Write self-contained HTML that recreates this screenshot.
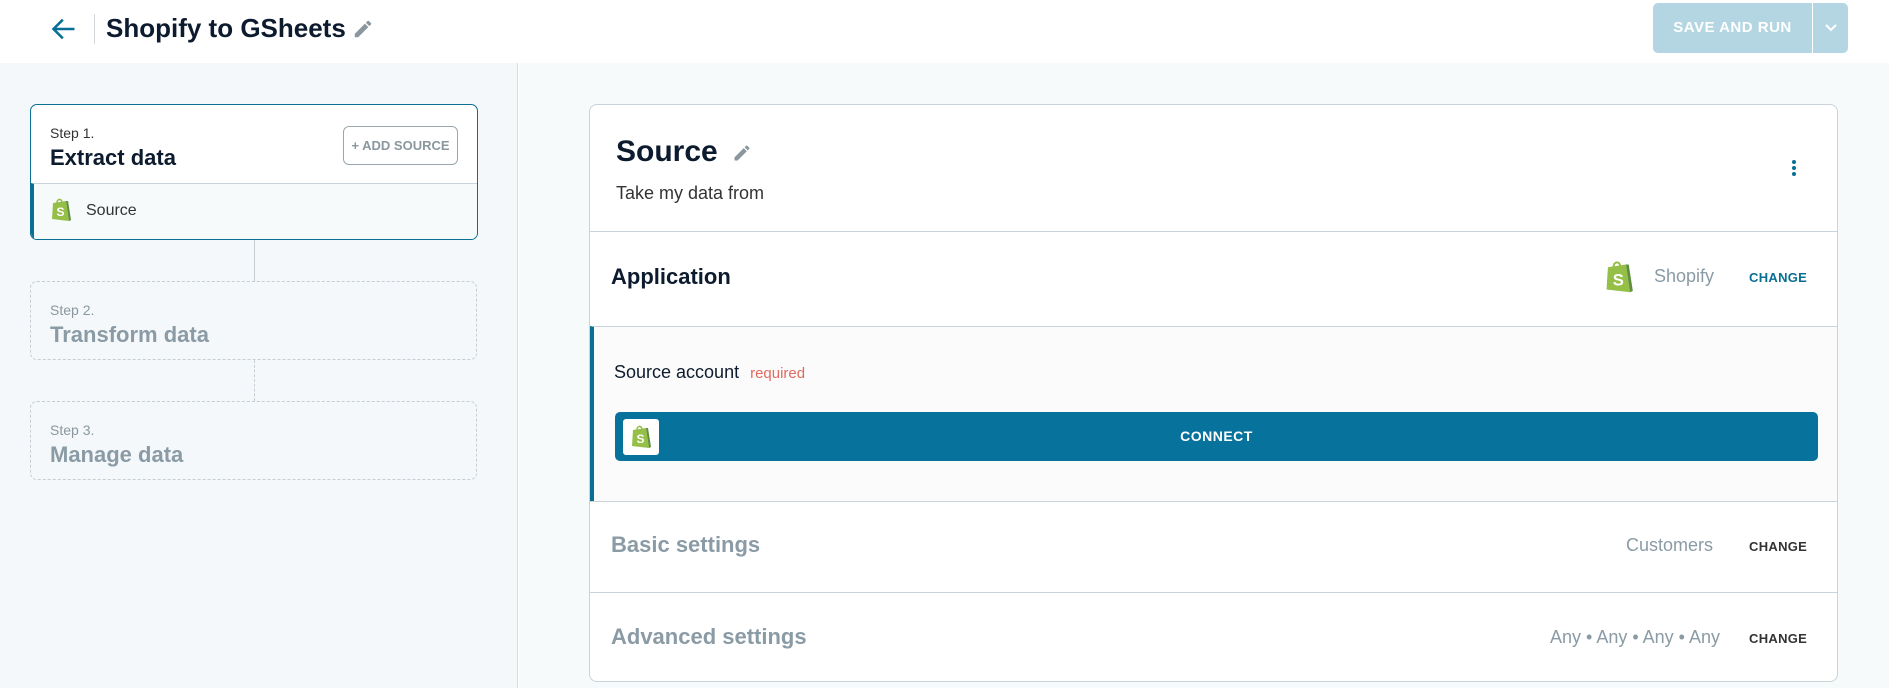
<!DOCTYPE html>
<html><head><meta charset="utf-8"><style>
*{box-sizing:border-box;margin:0;padding:0}
body{width:1889px;height:688px;overflow:hidden;font-family:"Liberation Sans",sans-serif;background:#fff;position:relative;color:#0d1b2e}
.abs{position:absolute}
.hdr{left:0;top:0;width:1889px;height:63px;background:#fff;z-index:2}
.side{left:0;top:63px;width:518px;height:625px;background:#f4f8fa;border-right:1px solid #d5dde2}
.main{left:519px;top:63px;width:1370px;height:625px;background:#f7fafb}
.card1{left:30px;top:104px;width:448px;height:136px;border:1px solid #0a6f95;border-radius:7px;background:#fff;overflow:hidden}
.dash{left:30px;width:447px;height:79px;border:1px dashed #c6ced4;border-radius:7px}
.step{font-size:14px;color:#333}
.ttl{font-size:22px;font-weight:bold}
.mc{left:589px;top:104px;width:1249px;height:578px;border:1px solid #c9d3da;border-radius:8px;background:#fff;overflow:hidden}
.sec{position:absolute;left:0;width:100%;border-top:1px solid #c9d3da}
.chg{position:absolute;font-size:13px;font-weight:bold;letter-spacing:.3px}
</style></head><body>
<div class="abs hdr">
 <svg class="abs" style="left:50px;top:15px" width="28" height="28" viewBox="0 0 24 24"><path d="M21 12H4M11 4l-8 8 8 8" fill="none" stroke="#0a6f95" stroke-width="2.2"/></svg>
 <div class="abs" style="left:94px;top:14px;width:1px;height:30px;background:#d0d6da"></div>
 <div class="abs" style="left:106px;top:13px;font-size:26px;font-weight:bold">Shopify to GSheets</div>
 <svg class="abs" style="left:352px;top:18px" width="22" height="22" viewBox="0 0 24 24"><path d="M3 17.25V21h3.75L17.8 9.94l-3.75-3.75L3 17.25zM20.7 7.04a1 1 0 000-1.41l-2.34-2.34a1 1 0 00-1.41 0l-1.83 1.83 3.75 3.75 1.83-1.83z" fill="#8a979f"/></svg>
 <div class="abs" style="left:1653px;top:3px;width:195px;height:50px;background:#b3d6e2;border-radius:5px"></div>
 <div class="abs" style="left:1653px;top:3px;width:159px;height:50px;line-height:50px;text-align:center;color:#fff;font-weight:bold;font-size:15px;letter-spacing:.5px">SAVE AND RUN</div>
 <div class="abs" style="left:1812px;top:3px;width:1px;height:50px;background:#fff"></div>
 <svg class="abs" style="left:1822px;top:21px" width="18" height="14" viewBox="0 0 18 14"><path d="M4 4l5 5 5-5" fill="none" stroke="#fff" stroke-width="2"/></svg>
</div>
<div class="abs side"></div>
<div class="abs main"></div>
<div class="abs" style="left:254px;top:240px;width:1px;height:42px;background:#c6ced4"></div>
<div class="abs" style="left:254px;top:360px;width:0;height:41px;border-left:1px dashed #c6ced4"></div>
<div class="abs card1">
 <div class="abs step" style="left:19px;top:20px">Step 1.</div>
 <div class="abs ttl" style="left:19px;top:40px">Extract data</div>
 <div class="abs" style="left:312px;top:21px;width:115px;height:39px;border:1px solid #9aa7af;border-radius:6px;text-align:center;line-height:37px;font-size:13px;font-weight:bold;color:#8a979f">+ ADD SOURCE</div>
 <div class="abs" style="left:0;top:78px;width:100%;height:58px;border-top:1px solid #c9d3da;background:#f7fafb;border-left:3px solid #0a6f95"></div>
 <svg class="abs" style="left:19px;top:92px" width="22" height="26" viewBox="0 0 22 26"><path d="M3 6l13-2 3 20-17-2z" fill="#95bf47"/><path d="M16 4l3 20 2-1-3-19z" fill="#5e8e3e"/><path d="M7 6c0-4 4-5 5-1" fill="none" stroke="#95bf47" stroke-width="1.5"/><text x="6.5" y="19" font-size="12" font-weight="bold" fill="#fff" font-family="Liberation Sans">S</text></svg>
 <div class="abs" style="left:55px;top:97px;font-size:16px;color:#333">Source</div>
</div>
<div class="abs dash" style="top:281px">
 <div class="abs step" style="left:19px;top:20px;color:#8a979f">Step 2.</div>
 <div class="abs ttl" style="left:19px;top:40px;color:#8a9ba5">Transform data</div>
</div>
<div class="abs dash" style="top:401px">
 <div class="abs step" style="left:19px;top:20px;color:#8a979f">Step 3.</div>
 <div class="abs ttl" style="left:19px;top:40px;color:#8a9ba5">Manage data</div>
</div>
<div class="abs mc">
 <div class="abs" style="left:26px;top:30px;font-size:30px;font-weight:bold">Source</div>
 <svg class="abs" style="left:142px;top:38px" width="20" height="20" viewBox="0 0 24 24"><path d="M3 17.25V21h3.75L17.8 9.94l-3.75-3.75L3 17.25zM20.7 7.04a1 1 0 000-1.41l-2.34-2.34a1 1 0 00-1.41 0l-1.83 1.83 3.75 3.75 1.83-1.83z" fill="#8a979f"/></svg>
 <div class="abs" style="left:26px;top:78px;font-size:18px;color:#333">Take my data from</div>
 <svg class="abs" style="left:1199px;top:54px" width="10" height="20"><circle cx="5" cy="3" r="2" fill="#0a6f95"/><circle cx="5" cy="9" r="2" fill="#0a6f95"/><circle cx="5" cy="15" r="2" fill="#0a6f95"/></svg>
 <div class="sec" style="top:126px;height:95px">
  <div class="abs" style="left:21px;top:32px;font-size:22px;font-weight:bold">Application</div>
  <svg class="abs" style="left:1013px;top:27px" width="32" height="36" viewBox="0 0 22 26"><path d="M3 6l13-2 3 20-17-2z" fill="#95bf47"/><path d="M16 4l3 20 2-1-3-19z" fill="#5e8e3e"/><path d="M7 6c0-4 4-5 5-1" fill="none" stroke="#95bf47" stroke-width="1.5"/><text x="6.5" y="19" font-size="12" font-weight="bold" fill="#fff" font-family="Liberation Sans">S</text></svg>
  <div class="abs" style="left:1064px;top:34px;font-size:18px;color:#8a9ba5">Shopify</div>
  <div class="chg" style="left:1159px;top:38px;color:#0a6f95">CHANGE</div>
 </div>
 <div class="sec" style="top:221px;height:175px;background:#fbfbfb;border-left:4px solid #0a6f95">
  <div class="abs" style="left:20px;top:35px;font-size:18px">Source account <span style="color:#e06a5f;font-size:15px;margin-left:6px">required</span></div>
  <div class="abs" style="left:21px;top:85px;width:1203px;height:49px;background:#07729c;border-radius:5px"></div>
  <div class="abs" style="left:29px;top:92px;width:36px;height:36px;background:#fff;border-radius:3px"></div>
  <svg class="abs" style="left:36px;top:97px" width="22" height="26" viewBox="0 0 22 26"><path d="M3 6l13-2 3 20-17-2z" fill="#95bf47"/><path d="M16 4l3 20 2-1-3-19z" fill="#5e8e3e"/><path d="M7 6c0-4 4-5 5-1" fill="none" stroke="#95bf47" stroke-width="1.5"/><text x="6.5" y="19" font-size="12" font-weight="bold" fill="#fff" font-family="Liberation Sans">S</text></svg>
  <div class="abs" style="left:21px;top:85px;width:1203px;line-height:49px;text-align:center;color:#fff;font-weight:bold;font-size:14px;letter-spacing:.5px">CONNECT</div>
 </div>
 <div class="sec" style="top:396px;height:91px">
  <div class="abs" style="left:21px;top:30px;font-size:22px;font-weight:bold;color:#8a9ba5">Basic settings</div>
  <div class="abs" style="left:1036px;top:33px;font-size:18px;color:#8a9ba5">Customers</div>
  <div class="chg" style="left:1159px;top:37px;color:#333">CHANGE</div>
 </div>
 <div class="sec" style="top:487px;height:92px">
  <div class="abs" style="left:21px;top:31px;font-size:22px;font-weight:bold;color:#8a9ba5">Advanced settings</div>
  <div class="abs" style="left:960px;top:34px;font-size:18px;color:#8a9ba5">Any • Any • Any • Any</div>
  <div class="chg" style="left:1159px;top:38px;color:#333">CHANGE</div>
 </div>
</div>
</body></html>
